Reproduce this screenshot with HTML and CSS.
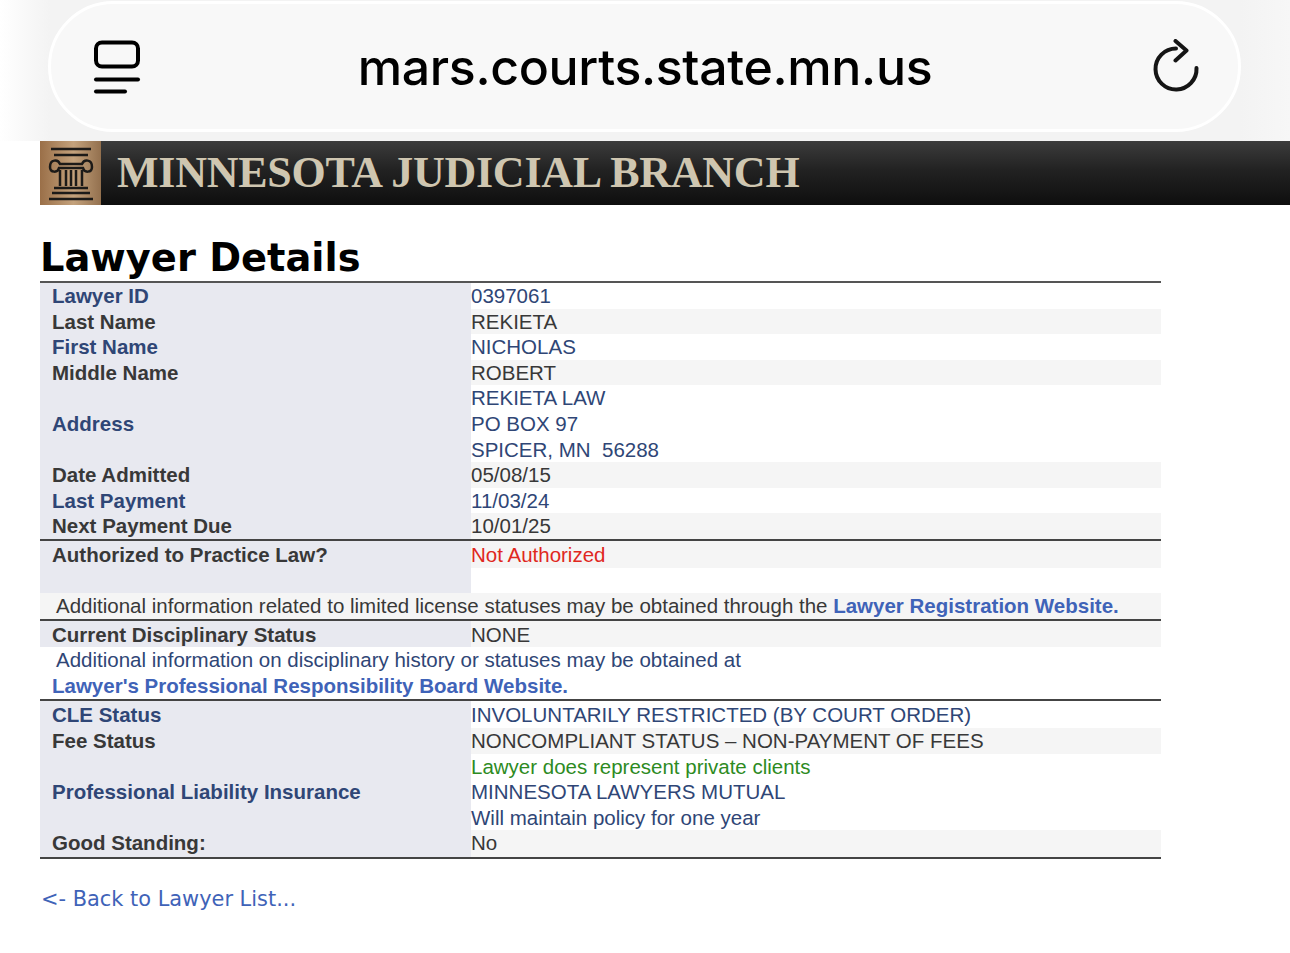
FILE: index.html
```html
<!DOCTYPE html>
<html lang="en">
<head>
  <meta charset="UTF-8">
  <title>Lawyer Details</title>
  <link rel="stylesheet" href="styles.css">
</head>
<body>
  <div class="topbar">
    <div class="pill">
      <svg class="tabs-icon" width="50" height="56" viewBox="0 0 50 56" fill="none" stroke="#000" stroke-linecap="round">
        <rect x="4" y="3.500" width="42" height="24" rx="6" stroke-width="4"/>
        <path d="M4 40.500H46" stroke-width="4"/>
        <path d="M4 52.500H33" stroke-width="4"/>
      </svg>
      <div class="url">mars.courts.state.mn.us</div>
      <svg class="reload-icon" width="50" height="56" viewBox="0 0 50 56" fill="none" stroke="#151515" stroke-width="4" stroke-linecap="round" stroke-linejoin="round">
        <path d="M45.500 29A20.500 20.500 0 1 1 25 9.500"/>
        <path d="M24.500 2L35.500 11.500L24.500 21.500"/>
      </svg>
    </div>
  </div>

  <div class="banner">
    <div class="crest">
      <svg width="52" height="60" viewBox="0 0 52 60" fill="none" stroke="#1c1a18">
        <path d="M6 6H46M9 12H43" stroke-width="2.500"/>
        <path d="M5 24C5 16 13 16 15 21H37C39 16 47 16 47 24C47 30 39 30 38 25H14C13 30 5 30 5 24Z" stroke-width="2.500"/>
        <path d="M15 27V43M21 27V43M26 27V43M31 27V43M37 27V43" stroke-width="2.500"/>
        <path d="M9 45H43M7 50H45M4 56H48" stroke-width="2.500"/>
      </svg>
    </div>
    <div class="banner-title">MINNESOTA JUDICIAL BRANCH</div>
  </div>

  <div class="content">
    <h1>Lawyer Details</h1>
    <table class="details">
      <colgroup>
        <col class="col-label">
        <col class="col-value">
      </colgroup>
      <tr class="navy first"><th>Lawyer ID</th><td>0397061</td></tr>
      <tr class="grey"><th>Last Name</th><td>REKIETA</td></tr>
      <tr class="navy"><th>First Name</th><td>NICHOLAS</td></tr>
      <tr class="grey"><th>Middle Name</th><td>ROBERT</td></tr>
      <tr class="navy"><th>Address</th><td>REKIETA LAW<br>PO BOX 97<br>SPICER, MN&nbsp; 56288</td></tr>
      <tr class="grey"><th>Date Admitted</th><td>05/08/15</td></tr>
      <tr class="navy"><th>Last Payment</th><td>11/03/24</td></tr>
      <tr class="grey"><th>Next Payment Due</th><td>10/01/25</td></tr>
      <tr class="grey ruled"><th>Authorized to Practice Law?</th><td class="red">Not Authorized</td></tr>
      <tr class="navy"><th>&nbsp;</th><td>&nbsp;</td></tr>
      <tr class="grey"><td class="note" colspan="2">Additional information related to limited license statuses may be obtained through the <a href="#">Lawyer Registration Website.</a></td></tr>
      <tr class="grey ruled"><th>Current Disciplinary Status</th><td>NONE</td></tr>
      <tr class="navy"><td class="note" colspan="2">Additional information on disciplinary history or statuses may be obtained at<br><a class="outdent" href="#">Lawyer's Professional Responsibility Board Website.</a></td></tr>
      <tr class="navy ruled tall"><th>CLE Status</th><td>INVOLUNTARILY RESTRICTED (BY COURT ORDER)</td></tr>
      <tr class="grey"><th>Fee Status</th><td>NONCOMPLIANT STATUS – NON-PAYMENT OF FEES</td></tr>
      <tr class="navy"><th>Professional Liability Insurance</th><td><span class="green">Lawyer does represent private clients</span><br>MINNESOTA LAWYERS MUTUAL<br>Will maintain policy for one year</td></tr>
      <tr class="grey tall"><th>Good Standing:</th><td>No</td></tr>
    </table>
    <a class="back" href="#">&lt;- Back to Lawyer List...</a>
  </div>
</body>
</html>
```

FILE: styles.css
```css
html, body {
  margin: 0;
  background: #fff;
  overflow: hidden;
}

body {
  height: 953px;
}

.topbar {
  height: 141px;
  padding: 1px 49px 0 48px;
  box-sizing: border-box;
  background: linear-gradient(to right, #fff 0, #f3f3f3 50px, #f3f3f3 1240px, #f7f7f7 1290px);
}

.pill {
  height: 131px;
  box-sizing: border-box;
  border: 3px solid #fff;
  border-radius: 66px;
  background: #f8f8f8;
  display: flex;
  align-items: center;
  justify-content: space-between;
  padding: 0 37px 0 41px;
}

.url {
  margin-right: 3px;
  font-family: Inter, sans-serif;
  font-size: 50px;
  font-weight: 500;
  letter-spacing: -0.350px;
  color: #000;
}

.banner {
  height: 64px;
  margin-left: 40px;
  display: flex;
  background: linear-gradient(to bottom, #3c3c3c 0, #222 45%, #0e0e0e 100%);
}

.crest {
  width: 61px;
  display: flex;
  align-items: center;
  justify-content: center;
  background: linear-gradient(to right, #9a6f48 0, #c4a27c 55%, #93704e 100%);
}

.banner-title {
  margin-left: 16px;
  font-family: "Liberation Serif", serif;
  font-weight: bold;
  font-size: 44px;
  letter-spacing: -0.250px;
  line-height: 64px;
  color: #cfc6b0;
  white-space: nowrap;
}

.content {
  padding-left: 40px;
}

h1 {
  margin: 29px 0 0 0;
  font-family: "DejaVu Sans", sans-serif;
  font-weight: bold;
  font-size: 38.400px;
  line-height: 47px;
  color: #000;
}

.details {
  width: 1121px;
  table-layout: fixed;
  border-collapse: collapse;
  border-top: 2px solid #555;
  border-bottom: 2px solid #444;
  font-family: "Liberation Sans", sans-serif;
  font-size: 20.500px;
  line-height: 25.600px;
}

.col-label {
  width: 431px;
}

.details th, .details td {
  padding: 0;
  text-align: left;
  vertical-align: middle;
}

.details th {
  padding-left: 12px;
  background: #e8e9f0;
  font-weight: bold;
}

.navy {
  color: #2f4676;
}

.grey {
  color: #383838;
}

.grey td {
  background: #f5f5f5;
}

.ruled th, .ruled td {
  border-top: 2px solid #444;
  padding-top: 1px;
}

.tall th, .tall td {
  padding-bottom: 1px;
}

.details .note {
  padding-left: 16px;
}

.outdent {
  margin-left: -4px;
}

.details a {
  color: #3f63b8;
  font-weight: bold;
  text-decoration: none;
}

.red {
  color: #e0281e;
}

.green {
  color: #2e8b1f;
}

.back {
  display: block;
  margin: 28px 0 0 1px;
  font-family: "DejaVu Sans", sans-serif;
  font-size: 20.900px;
  color: #3f63b8;
  text-decoration: none;
}
```
